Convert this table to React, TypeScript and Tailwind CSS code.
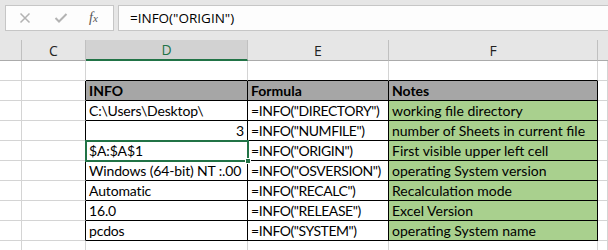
import React from 'react';

type Row = { info: string; formula: string; note: string; right?: boolean };

const rows: Row[] = [
    { info: 'C:\\Users\\Desktop\\', formula: '=INFO("DIRECTORY")', note: 'working file directory' },
    { info: '3', formula: '=INFO("NUMFILE")', note: 'number of Sheets in current file', right: true },
    { info: '$A:$A$1', formula: '=INFO("ORIGIN")', note: 'First visible upper left cell' },
    { info: 'Windows (64-bit) NT :.00', formula: '=INFO("OSVERSION")', note: 'operating System version' },
    { info: 'Automatic', formula: '=INFO("RECALC")', note: 'Recalculation mode' },
    { info: '16.0', formula: '=INFO("RELEASE")', note: 'Excel Version' },
    { info: 'pcdos', formula: '=INFO("SYSTEM")', note: 'operating System name' },
];

const cell = 'h-[20px] shrink-0 border-r border-b border-[#d4d4d4] flex items-end pb-[1px] px-[3px] whitespace-nowrap';

const Blank = ({ n = 1 }: { n?: number }) => (
    <div className="flex">
        <div className={`${cell} w-[22px]`} />
        <div className={`${cell} w-[64px]`} />
        <div className={`${cell} w-[162px] ${n === 3 ? 'border-b-black' : ''}`} />
        <div className={`${cell} w-[141px] ${n === 3 ? 'border-b-black' : ''}`} />
        <div className={`${cell} w-[209px] ${n === 3 ? 'border-b-black' : ''}`} />
        <div className={`${cell} flex-1`} />
    </div>
);

const App = () => {
    return (
        <div className="w-[608px] h-[250px] overflow-hidden bg-white" style={{ fontFamily: 'Lato, "Open Sans", sans-serif' }}>
            {/* formula bar */}
            <div className="h-[40px] bg-[#e6e6e6] pt-[5px] pl-[5px] flex gap-[4px]">
                <div className="w-[109px] h-[26px] bg-[#fdfdfd] border border-[#c6c6c6] flex items-center text-[#b3b3b3]">
                    <svg width="12" height="12" viewBox="0 0 12 12" className="ml-[13px]">
                        <path d="M1.5 1.5 L10.5 10.5 M10.5 1.5 L1.5 10.5" stroke="currentColor" strokeWidth="1.5" />
                    </svg>
                    <svg width="14" height="12" viewBox="0 0 14 12" className="ml-[23px]">
                        <path d="M1.5 6 L5 9.5 L12.5 2" stroke="currentColor" strokeWidth="2" fill="none" />
                    </svg>
                    <span className="ml-[21px] text-[#555] italic text-[14px] leading-none" style={{ fontFamily: '"Liberation Serif", serif' }}>
                        f<span className="text-[11px]">x</span>
                    </span>
                </div>
                <div className="flex-1 h-[26px] bg-[#fdfdfd] border border-r-0 border-[#c6c6c6] flex items-center pl-[11px] text-[13.5px] text-black" style={{ fontFamily: '"Open Sans", sans-serif' }}>
                    =INFO("ORIGIN")
                </div>
            </div>

            {/* column headers */}
            <div className="flex h-[21px] bg-[#e6e6e6] text-[14px] text-[#222]" style={{ fontFamily: '"Open Sans", sans-serif' }}>
                <div className="w-[22px] border-r border-b border-b-[#ababab] border-r-[#c0c0c0]" />
                <div className="w-[64px] border-r border-b border-b-[#ababab] border-r-[#c0c0c0] flex items-center justify-center">C</div>
                <div className="w-[162px] bg-[#d2d2d2] border-r border-r-[#c0c0c0] border-b-2 border-b-[#217346] flex items-center justify-center text-[#217346]">D</div>
                <div className="w-[141px] border-r border-b border-b-[#ababab] border-r-[#c0c0c0] flex items-center justify-center">E</div>
                <div className="w-[209px] border-r border-b border-b-[#ababab] border-r-[#c0c0c0] flex items-center justify-center">F</div>
                <div className="flex-1 border-b border-b-[#ababab]" />
            </div>

            {/* sheet */}
            <div className="text-[14px] leading-[17px] text-black">
                <Blank n={3} />
                <div className="flex font-bold">
                    <div className={`${cell} w-[22px]`} />
                    <div className={`${cell} w-[64px] border-r-black`} />
                    <div className={`${cell} w-[162px] bg-[#a6a6a6] border-black`}>INFO</div>
                    <div className={`${cell} w-[141px] bg-[#a6a6a6] border-black`}>Formula</div>
                    <div className={`${cell} w-[209px] bg-[#a6a6a6] border-black`}>Notes</div>
                    <div className={`${cell} flex-1`} />
                </div>
                {rows.map((r, i) => (
                    <div className="flex" key={r.formula}>
                        <div className={`${cell} w-[22px]`} />
                        <div className={`${cell} w-[64px] border-r-black`} />
                        <div className={`${cell} w-[162px] border-black relative tracking-[-0.15px] ${r.right ? 'justify-end' : ''}`}>
                            {r.info}
                            {i === 2 && (
                                <div className="absolute -left-[1px] -top-[1px] -right-[2px] -bottom-[2px] border-2 border-[#217346] z-10">
                                    <div className="absolute -right-[4px] -bottom-[4px] w-[6px] h-[6px] bg-[#217346] border border-white" />
                                </div>
                            )}
                        </div>
                        <div className={`${cell} w-[141px] border-black tracking-[-0.45px]`}>{r.formula}</div>
                        <div className={`${cell} w-[209px] bg-[#a9d08e] border-black`}>{r.note}</div>
                        <div className={`${cell} flex-1`} />
                    </div>
                ))}
                <Blank />
            </div>
        </div>
    );
};

export default App;
